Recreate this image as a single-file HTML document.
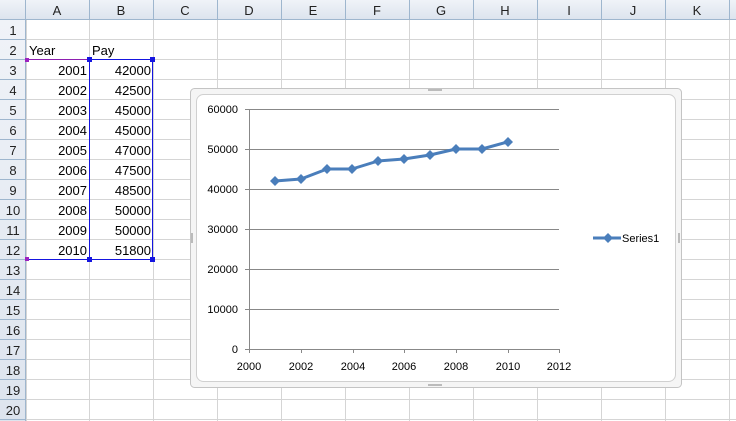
<!DOCTYPE html>
<html><head><style>
body{margin:0;width:736px;height:421px;overflow:hidden;background:#fff;font-family:"Liberation Sans",sans-serif;font-size:13px;}
.a{position:absolute}
</style></head><body>
<svg class="a" style="left:0;top:0" width="736" height="421" xmlns="http://www.w3.org/2000/svg" font-family="Liberation Sans, sans-serif">
<defs><linearGradient id="h" x1="0" y1="0" x2="0" y2="1"><stop offset="0" stop-color="#f0f3f8"/><stop offset="1" stop-color="#dde4ee"/></linearGradient></defs>
<rect x="0" y="0" width="736" height="19" fill="url(#h)"/>
<rect x="0" y="19" width="26" height="402" fill="url(#h)"/>
<g stroke="#d5d5d5" stroke-width="1">
<path d="M26.5 20V421M89.5 20V421M153.5 20V421M217.5 20V421M281.5 20V421M345.5 20V421M409.5 20V421M473.5 20V421M537.5 20V421M601.5 20V421M665.5 20V421M729.5 20V421"/>
<path d="M26 39.5H736M26 59.5H736M26 79.5H736M26 99.5H736M26 119.5H736M26 139.5H736M26 159.5H736M26 179.5H736M26 199.5H736M26 219.5H736M26 239.5H736M26 259.5H736M26 279.5H736M26 299.5H736M26 319.5H736M26 339.5H736M26 359.5H736M26 379.5H736M26 399.5H736M26 419.5H736"/>
</g>
<g stroke="#9eb6ce" stroke-width="1">
<path d="M0 19.5H736M25.5 0V421M89.5 0V19M153.5 0V19M217.5 0V19M281.5 0V19M345.5 0V19M409.5 0V19M473.5 0V19M537.5 0V19M601.5 0V19M665.5 0V19M729.5 0V19"/>
<path d="M0 39.5H25M0 59.5H25M0 79.5H25M0 99.5H25M0 119.5H25M0 139.5H25M0 159.5H25M0 179.5H25M0 199.5H25M0 219.5H25M0 239.5H25M0 259.5H25M0 279.5H25M0 299.5H25M0 319.5H25M0 339.5H25M0 359.5H25M0 379.5H25M0 399.5H25M0 419.5H25"/>
</g>
<g font-size="13" fill="#222" text-anchor="middle">
<text x="57" y="15">A</text><text x="121" y="15">B</text><text x="185" y="15">C</text><text x="249" y="15">D</text><text x="313" y="15">E</text><text x="377" y="15">F</text><text x="441" y="15">G</text><text x="505" y="15">H</text><text x="569" y="15">I</text><text x="633" y="15">J</text><text x="697" y="15">K</text>
<text x="13" y="35">1</text><text x="13" y="55">2</text><text x="13" y="75">3</text><text x="13" y="95">4</text><text x="13" y="115">5</text><text x="13" y="135">6</text><text x="13" y="155">7</text><text x="13" y="175">8</text><text x="13" y="195">9</text><text x="13" y="215">10</text><text x="13" y="235">11</text><text x="13" y="255">12</text><text x="13" y="275">13</text><text x="13" y="295">14</text><text x="13" y="315">15</text><text x="13" y="335">16</text><text x="13" y="355">17</text><text x="13" y="375">18</text><text x="13" y="395">19</text><text x="13" y="415">20</text>
</g>
<g font-size="13" fill="#000">
<text x="29" y="55">Year</text><text x="92" y="55">Pay</text>
<g text-anchor="end">
<text x="87" y="75">2001</text><text x="87" y="95">2002</text><text x="87" y="115">2003</text><text x="87" y="135">2004</text><text x="87" y="155">2005</text><text x="87" y="175">2006</text><text x="87" y="195">2007</text><text x="87" y="215">2008</text><text x="87" y="235">2009</text><text x="87" y="255">2010</text>
<text x="151" y="75">42000</text><text x="151" y="95">42500</text><text x="151" y="115">45000</text><text x="151" y="135">45000</text><text x="151" y="155">47000</text><text x="151" y="175">47500</text><text x="151" y="195">48500</text><text x="151" y="215">50000</text><text x="151" y="235">50000</text><text x="151" y="255">51800</text>
</g></g>
<path d="M27 59.5H89" stroke="#8e1fb0" stroke-width="1"/>
<rect x="89.5" y="59.5" width="63" height="200" fill="none" stroke="#1515e0"/>
<path d="M27 259.5H89" stroke="#1515e0"/>
<rect x="25" y="58" width="4" height="4" fill="#9b22c0"/><rect x="25" y="257" width="4" height="4" fill="#9b22c0"/>
<rect x="87" y="57" width="5" height="5" fill="#1515e0"/><rect x="150" y="57" width="5" height="5" fill="#1515e0"/><rect x="87" y="257" width="5" height="5" fill="#1515e0"/><rect x="150" y="257" width="5" height="5" fill="#1515e0"/>
<!-- chart -->
<rect x="190.5" y="88.5" width="491" height="299" rx="4" fill="#f5f5f5" stroke="#c4c4c4"/>
<rect x="196.5" y="94.5" width="479" height="287" rx="7" fill="#fff" stroke="#d0d0d0"/>
<g fill="#bbb"><rect x="428" y="89" width="14" height="2"/><rect x="428" y="384" width="14" height="2"/><rect x="191" y="233" width="2" height="10"/><rect x="678" y="233" width="2" height="10"/></g>
<g stroke="#888" stroke-width="1">
<path d="M249 109.5H559M249 149.5H559M249 189.5H559M249 229.5H559M249 269.5H559M249 309.5H559"/>
<path d="M249.5 109V349M245 349.5H559"/>
<path d="M245 109.5H249M245 149.5H249M245 189.5H249M245 229.5H249M245 269.5H249M245 309.5H249"/>
<path d="M249.5 349V353M301.5 349V353M353.5 349V353M404.5 349V353M456.5 349V353M508.5 349V353M559.5 349V353"/>
</g>
<g font-size="11" fill="#000" text-anchor="end">
<text x="238" y="113">60000</text><text x="238" y="153">50000</text><text x="238" y="193">40000</text><text x="238" y="233">30000</text><text x="238" y="273">20000</text><text x="238" y="313">10000</text><text x="238" y="353">0</text>
</g>
<g font-size="11" fill="#000" text-anchor="middle">
<text x="249" y="370">2000</text><text x="301" y="370">2002</text><text x="353" y="370">2004</text><text x="404" y="370">2006</text><text x="456" y="370">2008</text><text x="508" y="370">2010</text><text x="559" y="370">2012</text>
</g>
<polyline fill="none" stroke="#4a7ebb" stroke-width="3" stroke-linejoin="round" points="275,181 301,179 327,169 352,169 378,161 404,159 430,155 456,149 482,149 508,141.8"/>
<g fill="#4a7ebb">
<path d="M275 176l5 5-5 5-5-5z"/><path d="M301 174l5 5-5 5-5-5z"/><path d="M327 164l5 5-5 5-5-5z"/><path d="M352 164l5 5-5 5-5-5z"/><path d="M378 156l5 5-5 5-5-5z"/><path d="M404 154l5 5-5 5-5-5z"/><path d="M430 150l5 5-5 5-5-5z"/><path d="M456 144l5 5-5 5-5-5z"/><path d="M482 144l5 5-5 5-5-5z"/><path d="M508 137l5 5-5 5-5-5z"/>
<path d="M608 233l5 5-5 5-5-5z"/>
</g>
<path d="M593 238H621" stroke="#4a7ebb" stroke-width="3"/>
<text x="622" y="242" font-size="11" fill="#000">Series1</text>
</svg>
</body></html>
